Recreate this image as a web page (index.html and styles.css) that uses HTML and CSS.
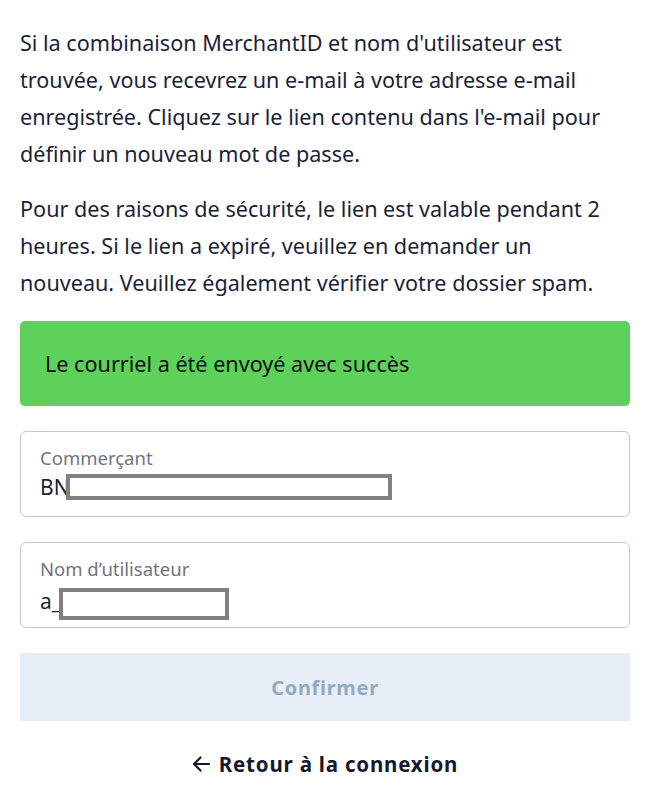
FILE: index.html
```html
<!DOCTYPE html>
<html lang="fr">
<head>
<meta charset="utf-8">
<title>Mot de passe oublié</title>
<link rel="stylesheet" href="styles.css">
</head>
<body>
<main class="page">
  <p class="text">Si la combinaison MerchantID et nom d'utilisateur est trouvée, vous recevrez un e-mail à votre adresse e-mail enregistrée. Cliquez sur le lien contenu dans l'e-mail pour définir un nouveau mot de passe.</p>
  <p class="text">Pour des raisons de sécurité, le lien est valable pendant 2 heures. Si le lien a expiré, veuillez en demander un nouveau. Veuillez également vérifier votre dossier spam.</p>
  <div class="alert">Le courriel a été envoyé avec succès</div>
  <div class="field">
    <span class="label">Commerçant</span>
    <span class="value">BN<span class="redact redact-1"></span></span>
  </div>
  <div class="field">
    <span class="label">Nom d’utilisateur</span>
    <span class="value">a_<span class="redact redact-2"></span></span>
  </div>
  <button class="confirm" disabled>Confirmer</button>
  <a class="back" href="#"><svg class="arrow" width="18" height="16" viewBox="0 0 18 16" aria-hidden="true"><path d="M17 8H2M8.5 1.5L2 8l6.5 6.5" fill="none" stroke="currentColor" stroke-width="2.2" stroke-linecap="round" stroke-linejoin="round"/></svg>Retour à la connexion</a>
</main>
</body>
</html>
```
FILE: styles.css
```css
html, body {
  margin: 0;
  padding: 0;
  background: #ffffff;
}
body {
  font-family: "Noto Sans", "Open Sans", sans-serif;
  color: #1b1f3a;
}
.page {
  padding: 24px 19px 0 20px;
  display: flex;
  flex-direction: column;
}
.text {
  margin: 0 0 18px 0;
  font-size: 21.6px;
  line-height: 37px;
}
.alert {
  margin-top: 2px;
  height: 85px;
  box-sizing: border-box;
  background: #5dd15a;
  border-radius: 5px;
  padding: 0 25px;
  display: flex;
  align-items: center;
  font-size: 21.6px;
  color: #0a0f0a;
}
.field {
  margin-top: 25px;
  height: 86px;
  box-sizing: border-box;
  border: 1px solid #bccadb;
  border-radius: 6px;
  padding: 13px 19px 0 19px;
  display: flex;
  flex-direction: column;
}
.label {
  font-size: 18.5px;
  line-height: 26px;
  color: #6f7480;
}
.value {
  font-size: 21px;
  line-height: 32px;
  color: #1b1f2a;
  display: flex;
  align-items: center;
}
.redact {
  display: inline-block;
  box-sizing: border-box;
  border: 4px solid #808080;
  background: #ffffff;
}
.redact-1 {
  width: 326px;
  height: 26px;
  margin-left: -4px;
}
.redact-2 {
  width: 170px;
  height: 32px;
  margin-left: -2px;
  margin-top: 6px;
}
.confirm {
  margin-top: 25px;
  height: 68px;
  border: none;
  background: #e8eef6;
  color: #95a9c1;
  font-family: "Noto Sans", "Open Sans", sans-serif;
  font-weight: 700;
  font-size: 20px;
  letter-spacing: 0.7px;
}
.back {
  margin-top: 29px;
  align-self: center;
  display: flex;
  align-items: center;
  gap: 9px;
  color: #14182e;
  text-decoration: none;
  font-weight: 700;
  font-size: 20.5px;
  letter-spacing: 0.8px;
}
.arrow {
  display: block;
}
```
